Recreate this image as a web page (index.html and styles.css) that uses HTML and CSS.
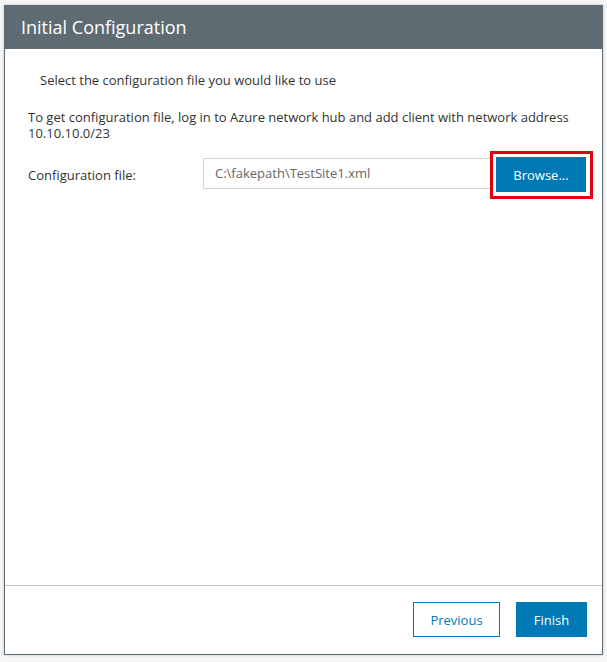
FILE: index.html
```html
<!DOCTYPE html>
<html>
<head>
<meta charset="utf-8">
<link rel="stylesheet" href="styles.css">
</head>
<body>
<div class="dialog">
  <div class="header">Initial Configuration</div>
  <div class="content">
    <p class="intro">Select the configuration file you would like to use</p>
    <p class="info">To get configuration file, log in to Azure network hub and add client with network address 10.10.10.0/23</p>
    <div class="row">
      <label class="label">Configuration file:</label>
      <div class="input">C:\fakepath\TestSite1.xml</div>
      <div class="highlight"><button class="btn primary browse">Browse...</button></div>
    </div>
  </div>
  <div class="footer">
    <button class="btn secondary">Previous</button>
    <button class="btn primary finish">Finish</button>
  </div>
</div>
</body>
</html>
```
FILE: styles.css
```css
html, body { margin: 0; padding: 0; }
body {
  background: #f6f6f6;
  font-family: "Open Sans", "Noto Sans", sans-serif;
  font-size: 13px;
  color: #333;
  width: 607px;
  height: 662px;
  overflow: hidden;
}
.dialog {
  margin: 5px 0 0 4px;
  width: 597px;
  height: 649px;
  background: #fff;
  border: 1px solid #5a6a73;
  border-top: none;
  box-shadow: 0 0 3px rgba(0,0,0,0.2);
  display: flex;
  flex-direction: column;
}
.header {
  background: #5e6b73;
  color: #fff;
  font-size: 18px;
  height: 44px;
  line-height: 44px;
  padding-left: 17px;
  margin: 0 -1px;
}
.content {
  flex: 1;
  padding: 0 23px;
}
.intro {
  margin: 22px 0 0 12px;
  line-height: 18px;
}
.info {
  margin: 20px 0 0 0;
  line-height: 16px;
}
.row {
  display: flex;
  align-items: center;
  margin-top: 10px;
}
.label { width: 175px; flex: none; }
.input {
  width: 275px;
  height: 29px;
  line-height: 29px;
  border: 1px solid #d4d4d4;
  padding-left: 11px;
  color: #666;
  margin-top: -3px;
  flex: none;
}
.highlight {
  border: 3px solid #e3000f;
  padding: 3px 4px 4px 3px;
  margin-left: -1px;
  flex: none;
}
.btn {
  font-family: "Open Sans", "Noto Sans", sans-serif;
  font-size: 13px;
  border: 1px solid #0078b4;
  cursor: pointer;
}
.primary { background: #0079b5; color: #fff; }
.secondary { background: #fff; color: #0079b5; }
.browse { width: 90px; height: 35px; display: block; }
.footer {
  border-top: 1px solid #c4c4c4;
  height: 52px;
  display: flex;
  justify-content: flex-end;
  align-items: flex-start;
  padding: 16px 15px 0 0;
  gap: 16px;
}
.footer .btn { height: 35px; }
.footer .secondary { width: 87px; }
.footer .finish { width: 71px; }
```
